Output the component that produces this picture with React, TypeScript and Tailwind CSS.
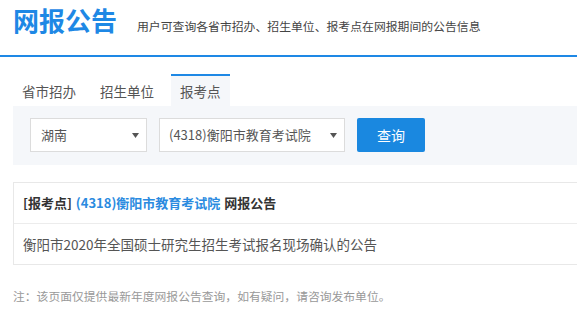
import React from "react";

function Caret() {
  return (
    <svg width="7" height="5" viewBox="0 0 7 5" className="shrink-0">
      <path d="M0 0 L7 0 L3.5 5 Z" fill="#555" />
    </svg>
  );
}

export default function App() {
  return (
    <div className="w-[577px] h-[324px] overflow-hidden bg-white font-['Noto_Sans_CJK_SC','Noto_Sans',sans-serif]">
      <header className="flex items-baseline h-[55px] pl-[13px] pt-[7px]">
        <span className="text-[26px] leading-[26px] font-bold text-[#1e88e5]">网报公告</span>
        <span className="ml-[20px] text-[11.85px] text-[#444]">用户可查询各省市招办、招生单位、报考点在网报期间的公告信息</span>
      </header>
      <div className="h-[2px] bg-[#1e88e5]" />
      <main className="ml-[13px] w-[1000px]">
        <div className="flex mt-[17px] text-[13.5px] text-[#555]">
          <div className="h-[32px] px-[9px] border-t-2 border-transparent flex items-center">省市招办</div>
          <div className="ml-[6px] h-[32px] px-[9px] border-t-2 border-transparent flex items-center">招生单位</div>
          <div className="ml-[8px] h-[32px] px-[9px] border-t-2 border-[#1e88e5] bg-[#f5f7fa] flex items-center">报考点</div>
        </div>
        <div className="bg-[#f5f7fa] h-[59px] pl-[17px] pt-[12px] flex gap-[12px] items-start">
          <div className="w-[117px] h-[34px] bg-white border border-[#dcdcdc] flex items-center justify-between pl-[10px] pr-[7px] text-[13px] text-[#555]">
            <span>湖南</span>
            <Caret />
          </div>
          <div className="w-[186px] h-[34px] bg-white border border-[#dcdcdc] flex items-center justify-between pl-[9px] pr-[7px] text-[13px] text-[#555]">
            <span>(4318)衡阳市教育考试院</span>
            <Caret />
          </div>
          <button className="w-[68px] h-[34px] rounded-[2px] bg-[#1a88e0] text-white text-[14px] flex items-center justify-center">查询</button>
        </div>
        <div className="mt-[17px] border border-[#e8e8e8]">
          <div className="h-[41px] flex items-center pl-[9px] text-[13px] font-bold text-[#333] border-b border-[#ececec]">
            <span>[报考点]</span>
            <span className="ml-[4px] text-[#2b8be0]">(4318)衡阳市教育考试院</span>
            <span className="ml-[4px]">网报公告</span>
          </div>
          <div className="h-[40px] flex items-center pl-[9px] text-[13.5px] text-[#555]">
            衡阳市2020年全国硕士研究生招生考试报名现场确认的公告
          </div>
        </div>
        <div className="mt-[22px] text-[11.8px] text-[#999]">注：该页面仅提供最新年度网报公告查询，如有疑问，请咨询发布单位。</div>
      </main>
    </div>
  );
}
